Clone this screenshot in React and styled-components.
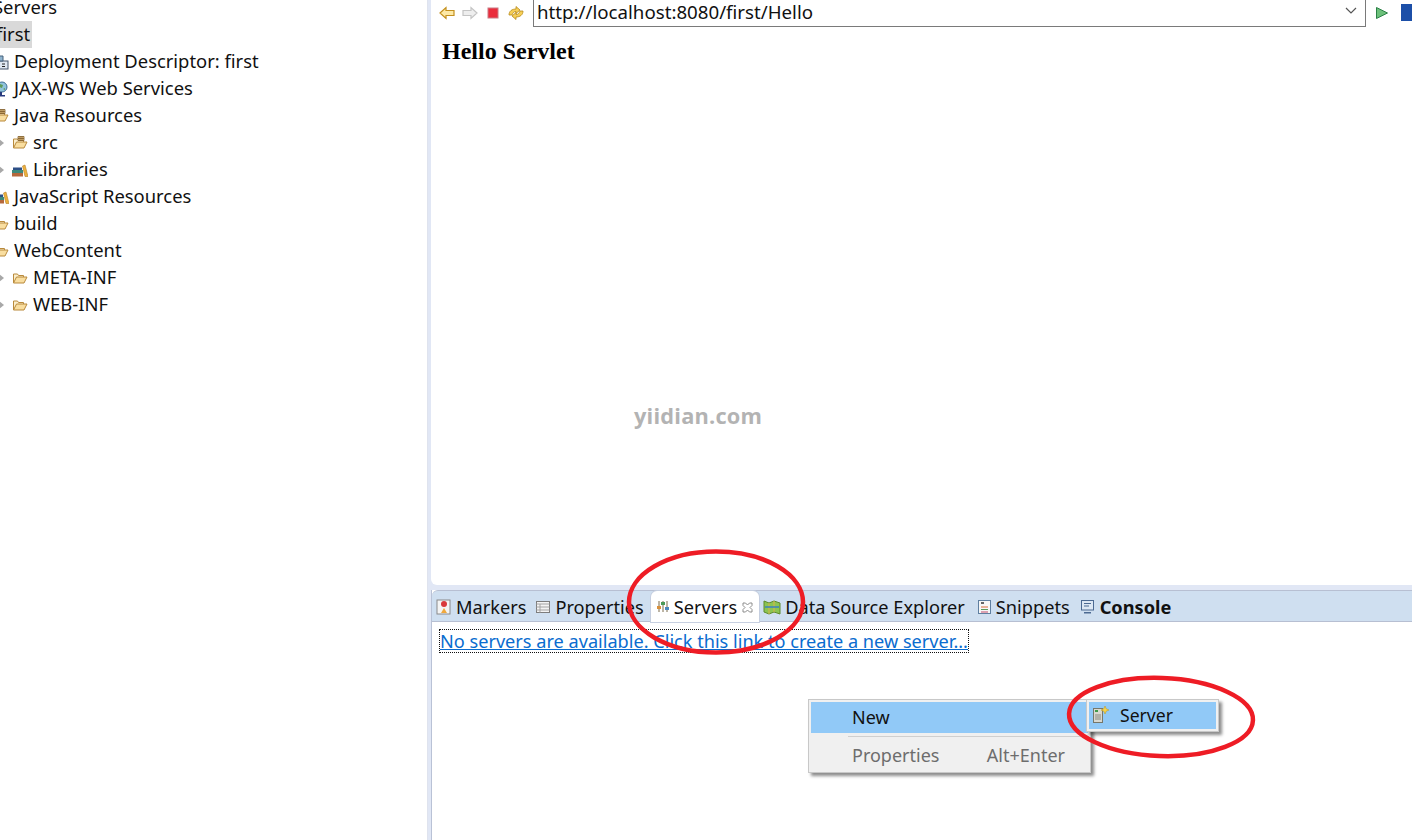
import styled, { createGlobalStyle } from "styled-components";

const GlobalStyle = createGlobalStyle`
  html, body {
    margin: 0;
    padding: 0;
    background: #fff;
    overflow: hidden;
  }
`;

const uiFont = `"Noto Sans", "Open Sans", sans-serif`;

const Page = styled.div`
  position: relative;
  display: flex;
  width: 1412px;
  height: 840px;
  overflow: hidden;
  background: #fff;
  color: #111;
  font-family: ${uiFont};
  font-size: 18.2px;
`;

const TreePane = styled.div`
  flex: none;
  width: 428px;
  margin-top: -6px;
  border-right: 1px solid #dfe3ee;
  box-sizing: border-box;
  font-size: 18.4px;
`;

const TreeRow = styled.div`
  display: flex;
  align-items: center;
  height: 27px;
  gap: 5px;
  margin-left: ${(p) => p.$indent}px;
  white-space: nowrap;
`;

const Label = styled.span`
  display: block;
  height: 27px;
  box-sizing: border-box;
  line-height: 25px;
  padding-bottom: 2px;
  padding-right: 2px;
  background: ${(p) => (p.$selected ? "#d9d9d9" : "transparent")};
`;

const Arrow = styled.span`
  flex: none;
  width: 0;
  height: 0;
  margin-right: 3px;
  border-left: 5px solid #a8a8a8;
  border-top: 4px solid transparent;
  border-bottom: 4px solid transparent;
`;

const IconSlot = styled.span`
  flex: none;
  display: flex;
  width: 16px;
  height: 16px;
`;

const RightColumn = styled.div`
  flex: 1;
  display: flex;
  flex-direction: column;
  min-width: 0;
  background: #e1e7f5;
  padding-left: 3px;
`;

const BrowserPane = styled.div`
  height: 585px;
  flex: none;
  background: #fff;
  border-bottom-left-radius: 6px;
`;

const BrowserBar = styled.div`
  display: flex;
  align-items: center;
  height: 27px;
  padding-left: 8px;
`;

const NavIcons = styled.div`
  display: flex;
  align-items: center;
  gap: 7px;
  width: 94px;
  flex: none;
  margin-top: -2px;
`;

const FlippedIcon = styled.span`
  display: flex;
  transform: scaleX(-1);
`;

const UrlBox = styled.div`
  display: flex;
  align-items: center;
  justify-content: space-between;
  box-sizing: border-box;
  flex: none;
  width: 833px;
  height: 29px;
  margin-top: -2px;
  padding: 0 8px 3px 3px;
  border: 1.5px solid #7a7a7a;
  font-size: 18.7px;
  white-space: nowrap;
`;

const BarRight = styled.div`
  display: flex;
  align-items: center;
  gap: 12px;
  margin: -2px 0 0 9px;
`;

const ClippedBadge = styled.span`
  display: block;
  width: 20px;
  height: 17px;
  background: #1c4fa8;
`;

const PageHeading = styled.h1`
  margin: 10px 0 0 11px;
  font-family: "Liberation Serif", serif;
  font-size: 24px;
  line-height: 28px;
  font-weight: bold;
  color: #000;
`;

const Sash = styled.div`
  flex: none;
  height: 5px;
`;

const BottomPane = styled.div`
  flex: 1;
  display: flex;
  flex-direction: column;
  background: #fff;
  border-left: 1px solid #b9c2d6;
  min-height: 0;
`;

const TabStrip = styled.div`
  flex: none;
  display: flex;
  align-items: stretch;
  height: 32px;
  box-sizing: border-box;
  background: #cfdff0;
  border-top: 1px solid #b7bfd2;
  border-bottom: 1px solid #b7bfd2;
  border-top-left-radius: 6px;
`;

const Tab = styled.div`
  display: flex;
  align-items: center;
  gap: ${(p) => p.$gap ?? 4}px;
  padding: 1px ${(p) => p.$pad ?? 6}px 0 ${(p) => p.$lead ?? 4}px;
  white-space: nowrap;
  font-weight: ${(p) => (p.$bold ? 700 : 400)};
  background: ${(p) => (p.$active ? "#fff" : "transparent")};
  border-radius: ${(p) => (p.$active ? "6px 6px 0 0" : "0")};
  margin-bottom: ${(p) => (p.$active ? "-1px" : "0")};
  box-shadow: ${(p) => (p.$active ? "0 0 0 1px #c6cfe0" : "none")};
`;

const CloseMark = styled.span`
  display: flex;
  margin-left: 1px;
`;

const ServersLink = styled.a`
  align-self: flex-start;
  margin: 8px 0 0 8px;
  height: 22px;
  line-height: 23px;
  box-sizing: border-box;
  outline: 1px dotted #111;
  color: #0a6ccf;
  font-size: 18.15px;
  text-decoration: underline;
  white-space: nowrap;
`;

const Watermark = styled.div`
  position: absolute;
  left: 634px;
  top: 401px;
  font-family: "Open Sans", sans-serif;
  font-size: 21.8px;
  font-weight: 700;
  color: #b3b3b3;
  letter-spacing: 0.2px;
`;

const ContextMenu = styled.div`
  position: absolute;
  left: 808px;
  top: 699px;
  width: 283px;
  height: 74px;
  box-sizing: border-box;
  padding: 2px;
  background: #f0f0f0;
  border: 1px solid #c8c8c8;
  box-shadow: 3px 3px 3px rgba(0, 0, 0, 0.45);
  font-size: 18px;
`;

const MenuItem = styled.div`
  display: flex;
  align-items: center;
  justify-content: space-between;
  height: 31px;
  box-sizing: border-box;
  padding: 0 23px ${(p) => (p.$active ? 2 : 0)}px 41px;
  color: ${(p) => (p.$disabled ? "#6d6d6d" : "#111")};
  background: ${(p) => (p.$active ? "#91c9f7" : "transparent")};
`;

const MenuRule = styled.div`
  height: 1px;
  margin: 3px 0 2px 37px;
  background: #cfcfcf;
`;

const SubMenu = styled.div`
  position: absolute;
  left: 1086px;
  top: 699px;
  width: 133px;
  height: 33px;
  box-sizing: border-box;
  padding: 2px;
  background: #f0f0f0;
  border: 1px solid #c8c8c8;
  box-shadow: 3px 3px 3px rgba(0, 0, 0, 0.45);
  font-size: 17.6px;
`;

const SubMenuItem = styled.div`
  display: flex;
  align-items: center;
  gap: 10px;
  height: 27px;
  padding: 0 0 2px 3px;
  box-sizing: border-box;
  background: #91c9f7;
`;

const Annotations = styled.svg`
  position: absolute;
  left: 0;
  top: 0;
  pointer-events: none;
`;

const Folder = ({ badge }) => (
  <svg width="16" height="16" viewBox="0 0 16 16">
    <path d="M1.5 13V4h4l1 1.500h5V7" fill="#fbeecb" stroke="#b98a3c" />
    <path d="M1.500 13l3-6h10.500l-3 6z" fill="#f9dea0" stroke="#b98a3c" />
    {badge && <path d="M6 1.500h6v4H6zM8 1.500v4M10 1.500v4M6 3.500h6" fill="#e9c98a" stroke="#7d5a2a" strokeWidth=".8" />}
  </svg>
);

const Books = () => (
  <svg width="16" height="16" viewBox="0 0 16 16">
    <rect x="0" y="11" width="11" height="3.500" fill="#b5683c" />
    <rect x="0" y="8" width="11" height="3" fill="#3d8a7c" />
    <rect x="1" y="5.500" width="9" height="2.500" fill="#2c4f86" />
    <path d="M10.500 4l2.500-1 3 11.500h-3z" fill="#eeb23c" stroke="#b5802a" strokeWidth=".6" />
  </svg>
);

const Descriptor = () => (
  <svg width="16" height="16" viewBox="0 0 16 16">
    <rect x="1" y="7" width="14" height="8" fill="#dfe8f2" stroke="#44546a" />
    <path d="M4 2h6v5H4z" fill="#8fb4cf" stroke="#44607a" />
    <path d="M3 10h3M3 12.500h3M9 10h3M9 12.500h3" stroke="#222" />
  </svg>
);

const Globe = () => (
  <svg width="16" height="16" viewBox="0 0 16 16">
    <circle cx="9" cy="6" r="5" fill="#8fc3dc" stroke="#3f6f96" />
    <path d="M7 3l3 1-1 3-3-1zM10 8l2-1v2z" fill="#5e9a58" />
    <path d="M4 14h8v1.500H4z" fill="#27397d" />
    <path d="M8 11v3" stroke="#27397d" strokeWidth="2" />
  </svg>
);

const treeRows = [
  { label: "Servers", indent: -7 },
  { label: "first", indent: -4, selected: true },
  { label: "Deployment Descriptor: first", indent: -7, icon: <Descriptor /> },
  { label: "JAX-WS Web Services", indent: -7, icon: <Globe /> },
  { label: "Java Resources", indent: -7, icon: <Folder badge /> },
  { label: "src", indent: -1, arrow: true, icon: <Folder badge /> },
  { label: "Libraries", indent: -1, arrow: true, icon: <Books /> },
  { label: "JavaScript Resources", indent: -7, icon: <Books /> },
  { label: "build", indent: -7, icon: <Folder /> },
  { label: "WebContent", indent: -7, icon: <Folder /> },
  { label: "META-INF", indent: -1, arrow: true, icon: <Folder /> },
  { label: "WEB-INF", indent: -1, arrow: true, icon: <Folder /> },
];

const BackIcon = ({ off }) => (
  <svg width="16" height="16" viewBox="0 0 16 16">
    <path
      d="M1 8l6-5.500V5.500h8v5H7v3z"
      fill={off ? "#eeeeee" : "#fde9a6"}
      stroke={off ? "#c4c4c4" : "#c4901e"}
      strokeWidth="1.2"
    />
  </svg>
);

const StopIcon = () => (
  <svg width="16" height="16" viewBox="0 0 16 16">
    <rect x="3" y="3" width="10" height="10" fill="#ea2c3c" stroke="#c97a84" />
  </svg>
);

const RefreshIcon = () => (
  <svg width="16" height="16" viewBox="0 0 16 16">
    <path d="M1 10c0-4 3-6 7-6V1.500l4 3.500-4 3.500V6.500c-2 0-3 1-4 3.500z" fill="#f6cf57" stroke="#b88a1c" strokeWidth=".8" />
    <path d="M15 6c0 4-3 6-7 6v2.500L4 11l4-3.500v2c2 0 3-1 4-3.500z" fill="#f6cf57" stroke="#b88a1c" strokeWidth=".8" />
  </svg>
);

const Chevron = () => (
  <svg width="12" height="8" viewBox="0 0 12 8">
    <path d="M1 1l5 5 5-5" fill="none" stroke="#555" strokeWidth="1.2" />
  </svg>
);

const GoIcon = () => (
  <svg width="14" height="14" viewBox="0 0 14 14">
    <path d="M1.500 1.500L12.500 7 1.500 12.500z" fill="#6cc07a" stroke="#2a8046" />
  </svg>
);

const MarkersIcon = () => (
  <svg width="16" height="16" viewBox="0 0 16 16">
    <rect x="1" y="1" width="13" height="14" fill="#f4f4f4" stroke="#8a8a8a" />
    <circle cx="8" cy="5" r="3" fill="#d9383a" />
    <path d="M5 14l3-5 3 5z" fill="#f0a83c" />
  </svg>
);

const PropertiesIcon = () => (
  <svg width="16" height="16" viewBox="0 0 16 16">
    <rect x="1.500" y="2.500" width="13" height="11" fill="#f4f4f4" stroke="#7d7d7d" />
    <path d="M1.500 5h13M5 5v8.500M1.500 8h13M1.500 11h13" stroke="#a4a4a4" />
  </svg>
);

const ServersIcon = () => (
  <svg width="14" height="16" viewBox="0 0 14 16">
    <path d="M3 2v11M7 2v11M11 2v11" stroke="#7a6a4a" />
    <rect x="1" y="7" width="4" height="3" fill="#d8903c" />
    <rect x="5" y="3" width="4" height="3" fill="#4b9a58" />
    <rect x="9" y="8" width="4" height="3" fill="#4b88c0" />
  </svg>
);

const CloseIcon = () => (
  <svg width="11" height="11" viewBox="0 0 11 11">
    <path d="M1 1h2.500L5.500 3 7.500 1H10v2.500L8 5.500l2 2V10H7.500l-2-2-2 2H1V7.500l2-2-2-2z" fill="#fff" stroke="#8c8c8c" />
  </svg>
);

const MapIcon = () => (
  <svg width="18" height="16" viewBox="0 0 18 16">
    <path d="M1 2l5 2 5-2 6 2v11l-6-2-5 2-5-2z" fill="#8cc452" stroke="#5d8a2c" />
    <path d="M6 4v11M11 2v11" stroke="#d8b44a" />
    <path d="M2 8h14" stroke="#3a80c0" strokeWidth="1.500" />
  </svg>
);

const SnippetsIcon = () => (
  <svg width="16" height="16" viewBox="0 0 16 16">
    <rect x="2.500" y="1.500" width="12" height="13" fill="#f6f6f6" stroke="#5f7fa0" />
    <path d="M5 4h3" stroke="#333" strokeWidth="1.500" />
    <path d="M5 8h7" stroke="#d86a3a" />
    <path d="M5 10.500h7" stroke="#5a9a5a" />
    <path d="M5 13h7" stroke="#c04a6a" />
  </svg>
);

const ConsoleIcon = () => (
  <svg width="16" height="16" viewBox="0 0 16 16">
    <rect x="1.500" y="1.500" width="12" height="9.500" fill="#dde8f4" stroke="#4c6a92" />
    <path d="M4 4.500h7M4 7h5" stroke="#4c6a92" />
    <path d="M4 13h7v1.500H4z" fill="#4c6a92" />
  </svg>
);

const NewServerIcon = () => (
  <svg width="18" height="18" viewBox="0 0 18 18">
    <rect x="1.500" y="2.500" width="9" height="14" fill="#d8d8d0" stroke="#77776a" />
    <rect x="3" y="4" width="3" height="2" fill="#3f9a4a" />
    <path d="M3 9h6M3 11h6M3 13h6" stroke="#8a8a80" />
    <path d="M13 0l1.200 2.800 2.800 1.200-2.800 1.200L13 8l-1.200-2.800L9 4l2.800-1.200z" fill="#f6d44a" stroke="#b8901c" strokeWidth=".5" />
  </svg>
);

const App = () => (
  <>
    <GlobalStyle />
    <Page>
      <TreePane>
        {treeRows.map((row) => (
          <TreeRow key={row.label} $indent={row.indent}>
            {row.arrow && <Arrow />}
            {row.icon && <IconSlot>{row.icon}</IconSlot>}
            <Label $selected={row.selected}>{row.label}</Label>
          </TreeRow>
        ))}
      </TreePane>

      <RightColumn>
        <BrowserPane>
          <BrowserBar>
            <NavIcons>
              <BackIcon />
              <FlippedIcon>
                <BackIcon off />
              </FlippedIcon>
              <StopIcon />
              <RefreshIcon />
            </NavIcons>
            <UrlBox>
              <span>http://localhost:8080/first/Hello</span>
              <Chevron />
            </UrlBox>
            <BarRight>
              <GoIcon />
              <ClippedBadge />
            </BarRight>
          </BrowserBar>
          <PageHeading>Hello Servlet</PageHeading>
        </BrowserPane>
        <Sash />
        <BottomPane>
          <TabStrip>
            <Tab $pad={5}>
              <MarkersIcon />
              Markers
            </Tab>
            <Tab $pad={7}>
              <PropertiesIcon />
              Properties
            </Tab>
            <Tab $active $pad={6} $lead={5}>
              <ServersIcon />
              Servers
              <CloseMark>
                <CloseIcon />
              </CloseMark>
            </Tab>
            <Tab $gap={4}>
              <MapIcon />
              Data Source Explorer
            </Tab>
            <Tab $lead={5}>
              <SnippetsIcon />
              Snippets
            </Tab>
            <Tab $bold $lead={4}>
              <ConsoleIcon />
              Console
            </Tab>
          </TabStrip>
          <ServersLink>No servers are available. Click this link to create a new server...</ServersLink>
        </BottomPane>
      </RightColumn>

      <Watermark>yiidian.com</Watermark>

      <ContextMenu>
        <MenuItem $active>New</MenuItem>
        <MenuRule />
        <MenuItem $disabled>
          <span>Properties</span>
          <span>Alt+Enter</span>
        </MenuItem>
      </ContextMenu>
      <SubMenu>
        <SubMenuItem>
          <NewServerIcon />
          Server
        </SubMenuItem>
      </SubMenu>

      <Annotations width="1412" height="840" viewBox="0 0 1412 840">
        <ellipse cx="716" cy="602" rx="87" ry="50.500" fill="none" stroke="#ee1c25" strokeWidth="4.500" />
        <ellipse
          cx="1161"
          cy="717"
          rx="92"
          ry="39"
          transform="rotate(2 1161 717)"
          fill="none"
          stroke="#ee1c25"
          strokeWidth="4.500"
        />
      </Annotations>
    </Page>
  </>
);

export default App;
